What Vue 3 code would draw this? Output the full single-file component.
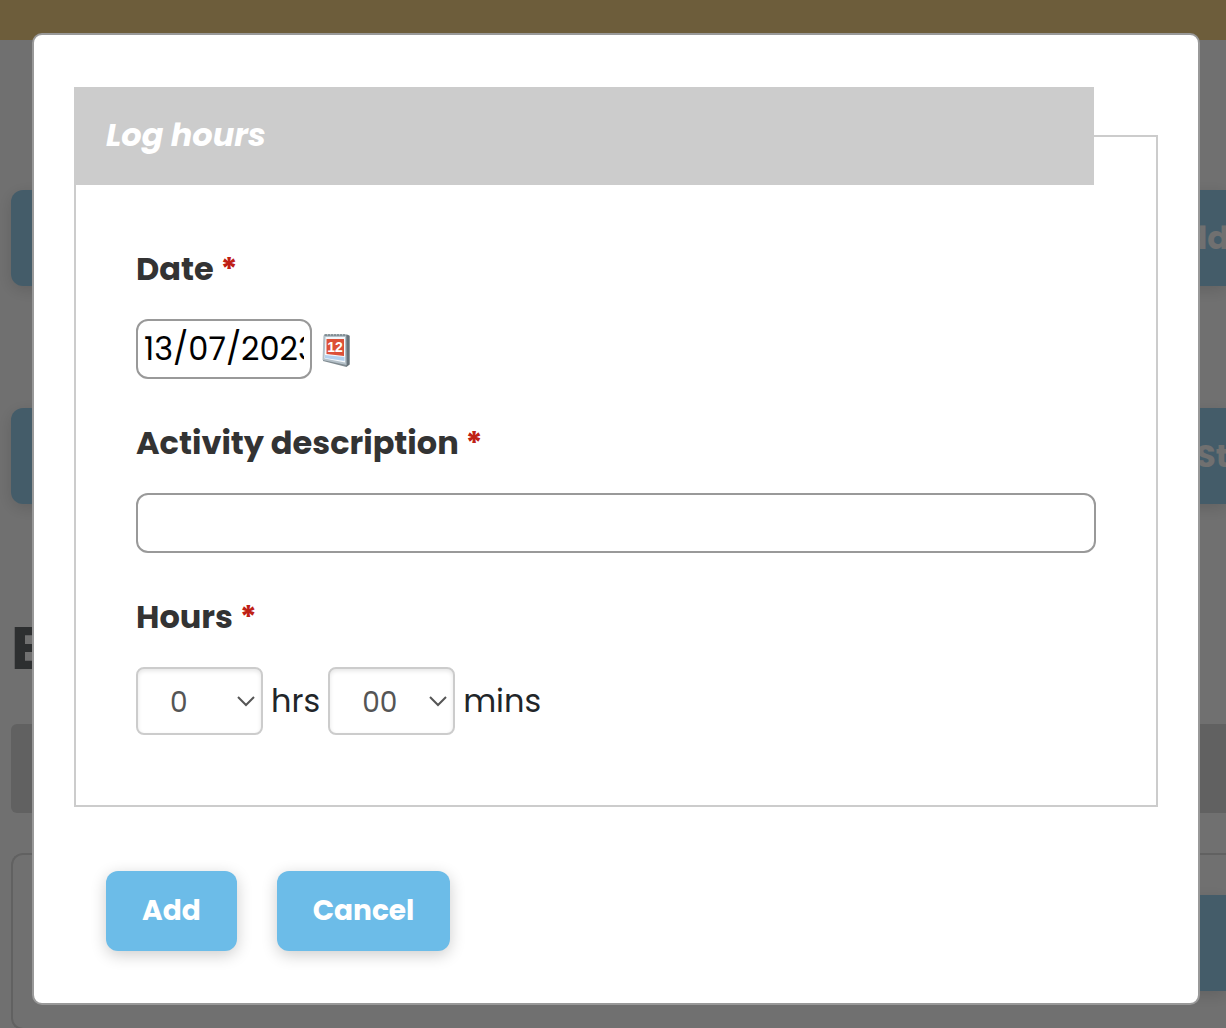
<template>
  <div class="page">
    <div class="banner"></div>
    <div class="page-body">
      <div class="action-row">
        <div class="action"></div>
        <div class="action action-end">Add</div>
      </div>
      <div class="action-row">
        <div class="action"></div>
        <div class="action action-end action-start">St</div>
      </div>
      <h1 class="page-title">E</h1>
      <div class="bar"></div>
      <div class="card">
        <div class="action action-flush"></div>
      </div>
    </div>

    <div class="backdrop"></div>

    <form class="modal" role="dialog" aria-labelledby="log-title" @submit.prevent>
      <fieldset class="group">
        <legend id="log-title">Log hours</legend>

        <div class="field">
          <label for="date">Date <span class="required">*</span></label>
          <div class="controls">
            <input id="date" v-model="date" class="text-input date-input" type="text" />
            <button class="calendar" type="button" aria-label="Calendar">
              <svg viewBox="0 0 28 34" width="28" height="34">
                <path d="M2 1.500h23l2.500 1v29l-3 2.500L1 28z" fill="#7f8a90" />
                <path d="M25 2l2.500 1v28.500l-3 2z" fill="#66727a" />
                <path d="M1.500 2.500H24l.5 29.500L.5 27z" fill="#b4c0c8" />
                <path d="M3.500 4h19.500v25.500L2.500 25.500z" fill="#f4f8fc" />
                <path d="M3 22l19.500 2v4L3 25z" fill="#b3d0ee" />
                <path d="M4.500 6h17.500v17l-17.500-2z" fill="#dc5038" />
                <path d="M3 2h21" stroke="#7a868d" stroke-width="1.500" stroke-dasharray="2 1" />
                <text x="13" y="19" text-anchor="middle">12</text>
              </svg>
            </button>
          </div>
        </div>

        <div class="field">
          <label for="activity">Activity description <span class="required">*</span></label>
          <div class="controls">
            <input id="activity" v-model="activity" class="text-input" type="text" />
          </div>
        </div>

        <div class="field">
          <label for="hours">Hours <span class="required">*</span></label>
          <div class="controls time-controls">
            <div class="select-box">
              <select id="hours" v-model="hours">
                <option>0</option>
              </select>
              <svg class="chevron" viewBox="0 0 18 12" width="18" height="12">
                <path d="M1 2l8 8 8-8" />
              </svg>
            </div>
            <label class="unit" for="hours">hrs</label>
            <div class="select-box">
              <select id="minutes" v-model="minutes">
                <option>00</option>
              </select>
              <svg class="chevron" viewBox="0 0 18 12" width="18" height="12">
                <path d="M1 2l8 8 8-8" />
              </svg>
            </div>
            <label class="unit" for="minutes">mins</label>
          </div>
        </div>
      </fieldset>

      <div class="buttons">
        <button class="btn" type="submit">Add</button>
        <button class="btn" type="button">Cancel</button>
      </div>
    </form>
  </div>
</template>

<script setup>
import { ref } from 'vue'

const date = ref('13/07/2023')
const activity = ref('')
const hours = ref('0')
const minutes = ref('00')
</script>

<style>
body {
  margin: 0;
  background: #fff;
}
</style>

<style scoped>
.page {
  position: relative;
  box-sizing: border-box;
  min-height: 100vh;
  overflow: hidden;
  font-family: Poppins, Inter, "Open Sans", sans-serif;
  font-size: 32px;
  line-height: 48px;
  color: #212529;
}
.page *,
.page *::before {
  box-sizing: border-box;
}

/* page behind the dialog */
.banner {
  height: 40px;
  background: #f4bf4e;
}
.page-body {
  padding: 150px 0 0 11px;
}
.action-row {
  display: flex;
  gap: 40px;
  margin-bottom: 122px;
}
.action {
  flex: 1;
  height: 96px;
  padding: 24px 0;
  border-radius: 12px;
  background: #6cbce8;
  box-shadow: 0 4px 16px rgba(0, 0, 0, 0.2);
  color: #fff;
  font-weight: 700;
}
.action-end {
  flex: none;
  width: 180px;
  padding-left: 116px;
  border-radius: 12px 0 0 12px;
}
.action-start {
  padding-left: 150px;
}
.action-flush {
  border-radius: 12px 0 0 12px;
}
.page-title {
  margin: -8px 0 46px;
  font-size: 60px;
  line-height: 60px;
  font-weight: 700;
}
.bar {
  height: 89px;
  border-radius: 6px 0 0 6px;
  background: #ccc;
}
.card {
  display: flex;
  height: 177px;
  margin-top: 40px;
  padding: 40px 0 0 60px;
  border: 2px solid #ccc;
  border-right: 0;
  border-radius: 12px 0 0 12px;
}
.backdrop {
  position: absolute;
  inset: 0;
  background: rgba(51, 51, 51, 0.7);
}

/* dialog */
.modal {
  position: absolute;
  top: 33px;
  left: 32px;
  right: 26px;
  padding: 52px 40px;
  border: 2px solid #999;
  border-radius: 10px;
  background: #fff;
}
.group {
  min-width: 0;
  margin: 0 0 64px;
  padding: 60px 60px 70px;
  border: 2px solid #ccc;
}
.group legend {
  width: calc(100% + 60px);
  margin-left: -62px;
  padding: 24px 32px 26px;
  background: #ccc;
  color: #fff;
  font-weight: 700;
  font-style: italic;
}
.field + .field {
  margin-top: 40px;
}
.field > label {
  display: block;
  color: #333;
  font-weight: 700;
}
.required {
  color: #bf2015;
}
.controls {
  display: flex;
  align-items: center;
  gap: 10px;
  margin-top: 26px;
}
.time-controls {
  gap: 8px;
}
.text-input {
  width: 100%;
  height: 60px;
  padding: 4px 6px;
  border: 2px solid #999;
  border-radius: 12px;
  background: #fff;
  color: #000;
  font: inherit;
}
.date-input {
  width: 176px;
}
.calendar {
  display: flex;
  padding: 2px 0 0;
  border: 0;
  background: none;
}
.calendar text {
  fill: #fff;
  font-size: 14px;
  font-weight: 700;
}
.select-box {
  position: relative;
}
select {
  display: block;
  width: 127px;
  height: 68px;
  padding: 4px 32px 0;
  border: 2px solid #ccc;
  border-radius: 8px;
  appearance: none;
  background: #fff;
  box-shadow: inset 0 2px 4px rgba(0, 0, 0, 0.1);
  color: #555;
  font: inherit;
  font-size: 28px;
}
.chevron {
  position: absolute;
  top: 28px;
  right: 8px;
  fill: none;
  stroke: #555;
  stroke-width: 2;
  pointer-events: none;
}
.buttons {
  display: flex;
  gap: 40px;
  padding-left: 32px;
}
.btn {
  height: 80px;
  padding: 0 36px;
  border: 0;
  border-radius: 12px;
  background: #6cbce8;
  box-shadow: 0 4px 16px rgba(0, 0, 0, 0.2);
  color: #fff;
  font: inherit;
  font-size: 28px;
  font-weight: 700;
}
</style>
